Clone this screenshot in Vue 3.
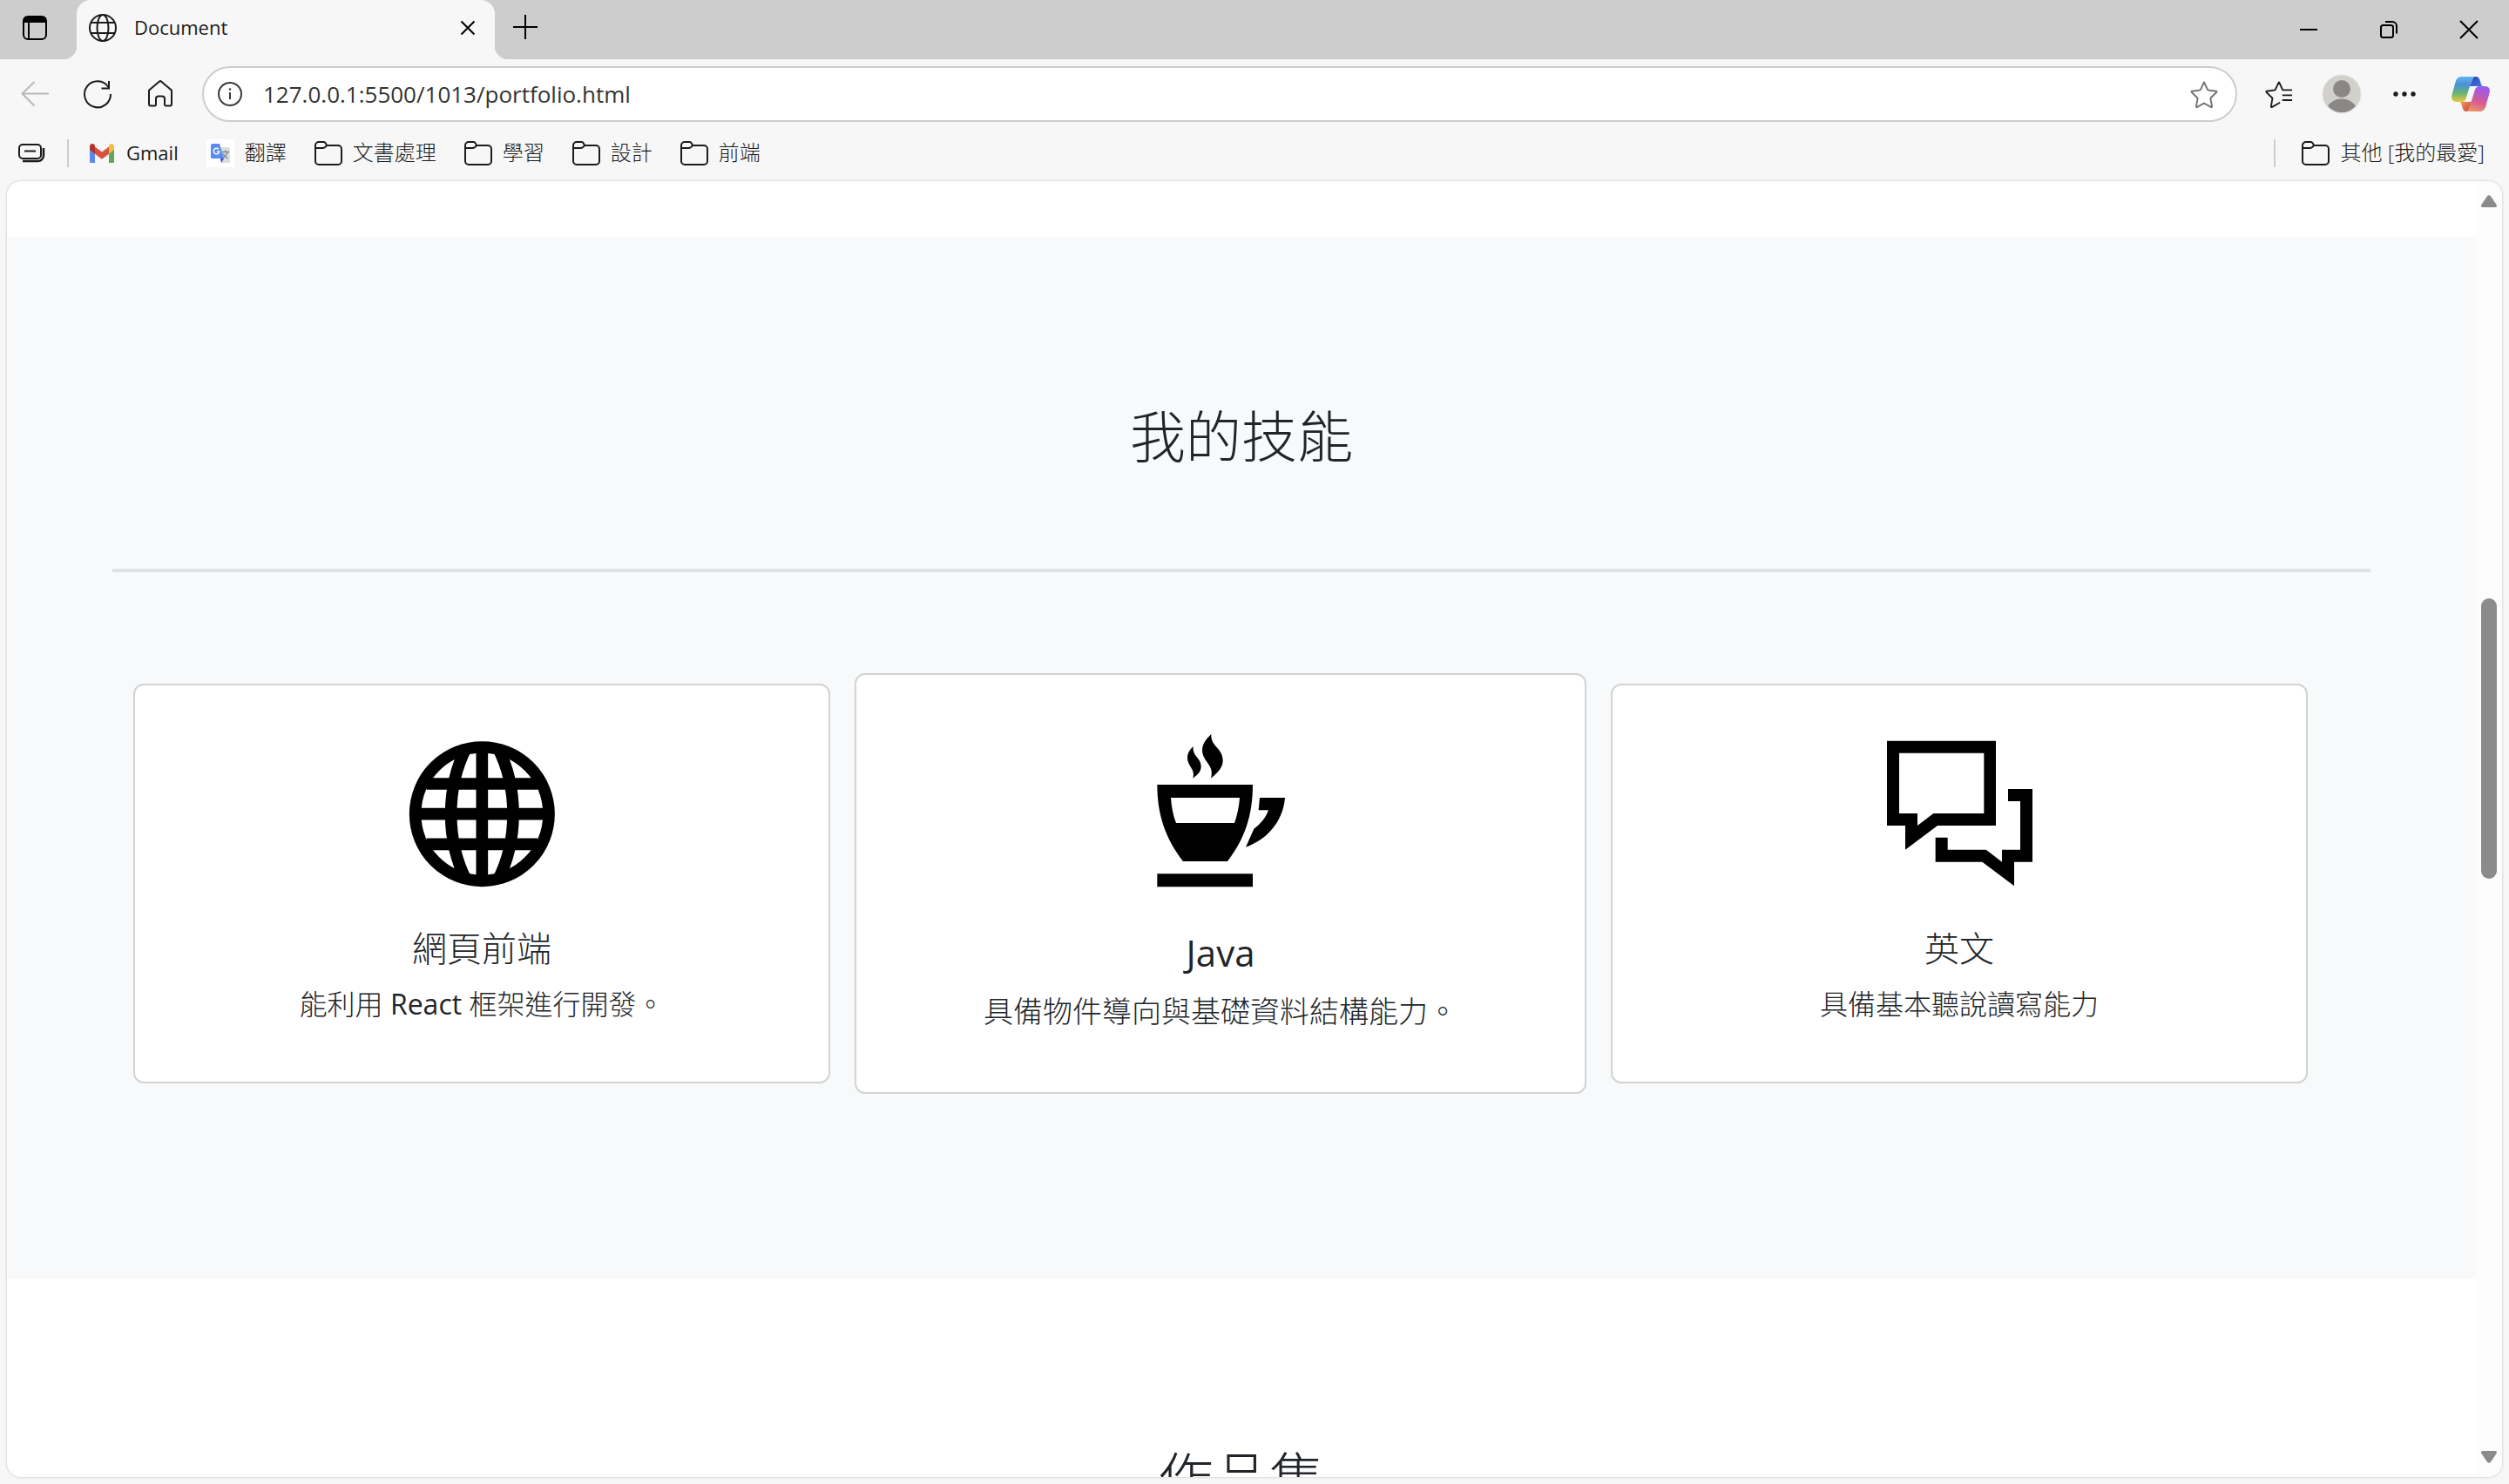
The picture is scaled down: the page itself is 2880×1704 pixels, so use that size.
<script setup>
const bookmarks = [
  { name: 'Gmail', icon: 'gmail', latin: true },
  { name: '翻譯', icon: 'translate' },
  { name: '文書處理', icon: 'folder' },
  { name: '學習', icon: 'folder' },
  { name: '設計', icon: 'folder' },
  { name: '前端', icon: 'folder' },
]

const skills = [
  { title: '網頁前端', text: ['能利用 ', 'React', ' 框架進行開發。'], icon: 'globe' },
  { title: 'Java', text: ['具備物件導向與基礎資料結構能力。'], icon: 'cup', raised: true, latin: true },
  { title: '英文', text: ['具備基本聽說讀寫能力'], icon: 'chat' },
]

const isLatin = (part) => /^[A-Za-z]+$/.test(part)
</script>

<template>
  <div class="browser" lang="zh-Hant">
    <header class="titlebar">
      <button class="tab-actions" aria-label="分頁動作">
        <svg width="28" height="28" viewBox="0 0 28 28">
          <rect x="1" y="1" width="26" height="26" rx="5" fill="none" stroke="#000" stroke-width="2" />
          <path d="M1 8V5a4 4 0 0 1 4-4h18a4 4 0 0 1 4 4v3z" fill="#000" />
          <path d="M7 8v19" stroke="#000" stroke-width="2" />
        </svg>
      </button>
      <div class="tab">
        <svg width="32" height="32" viewBox="0 0 32 32" fill="none" stroke="#1b1b1b" stroke-width="2">
          <circle cx="16" cy="16" r="15" />
          <ellipse cx="16" cy="16" rx="6.5" ry="15" />
          <path d="M2.500 10h27M2.500 22h27" />
        </svg>
        <span class="tab-title">Document</span>
        <button class="tab-close" aria-label="關閉分頁">
          <svg width="18" height="18" viewBox="0 0 18 18"><path d="M1.500 1.500l15 15M16.500 1.500l-15 15" stroke="#000" stroke-width="2" /></svg>
        </button>
      </div>
      <button class="new-tab" aria-label="新增索引標籤">
        <svg width="28" height="28" viewBox="0 0 28 28"><path d="M14 0v28M0 14h28" stroke="#000" stroke-width="2" /></svg>
      </button>
      <div class="window-buttons">
        <button aria-label="最小化">
          <svg width="20" height="20" viewBox="0 0 20 20"><path d="M0 10h20" stroke="#000" stroke-width="2" /></svg>
        </button>
        <button aria-label="還原">
          <svg width="20" height="20" viewBox="0 0 20 20" fill="none" stroke="#000" stroke-width="2">
            <rect x="1" y="5" width="14" height="14" rx="2.500" />
            <path d="M6 1h8a5 5 0 0 1 5 5v8.500" />
          </svg>
        </button>
        <button aria-label="關閉">
          <svg width="20" height="20" viewBox="0 0 20 20"><path d="M0 0l20 20M20 0L0 20" stroke="#000" stroke-width="2" /></svg>
        </button>
      </div>
    </header>

    <nav class="toolbar">
      <button class="tool" aria-label="上一頁">
        <svg width="32" height="32" viewBox="0 0 32 32" fill="none" stroke="#b9b9b9" stroke-width="2"><path d="M15.500 2L1.500 15.500l14 14M1.500 15.500H32" /></svg>
      </button>
      <button class="tool" aria-label="重新整理">
        <svg width="32" height="32" viewBox="0 0 32 32" fill="none" stroke="#1b1b1b" stroke-width="2"><path d="M31 16A15 15 0 1 1 28.500 8M29 1v8.500h-8.500" /></svg>
      </button>
      <button class="tool" aria-label="首頁">
        <svg width="32" height="32" viewBox="0 0 32 32" fill="none" stroke="#1b1b1b" stroke-width="2" stroke-linejoin="round"><path d="M3 12.500a2 2 0 0 1 .8-1.600L15 1.500a1.600 1.600 0 0 1 2 0l11.200 9.400a2 2 0 0 1 .8 1.600V27.500a2 2 0 0 1-2 2h-4.500a1.500 1.500 0 0 1-1.500-1.500v-6.500a3 3 0 0 0-3-3h-4a3 3 0 0 0-3 3V28a1.500 1.500 0 0 1-1.500 1.500H5a2 2 0 0 1-2-2z" /></svg>
      </button>
      <div class="address">
        <svg width="28" height="28" viewBox="0 0 28 28" fill="none" stroke="#3a3a3a" stroke-width="2"><circle cx="14" cy="14" r="13" /><path d="M14 12v8" /><circle cx="14" cy="8.500" r="1.300" fill="#3a3a3a" stroke="none" /></svg>
        <input type="text" aria-label="網址" value="127.0.0.1:5500/1013/portfolio.html" />
        <button class="bare" aria-label="加入最愛">
          <svg width="32" height="32" viewBox="0 0 34 34" fill="none" stroke="#707070" stroke-width="2" stroke-linejoin="round"><path d="M17 2.500l4.500 9.600 10.300 1.500c.6.100.8.700.4 1.100l-7.400 7.300 1.800 10.300c.1.600-.4 1-.9.700L17 28.100 8.300 33c-.5.300-1-.1-.9-.7l1.800-10.300-7.400-7.300c-.4-.4-.2-1 .4-1.100l10.300-1.500z" /></svg>
        </button>
      </div>
      <div class="tools-end">
        <button class="tool" aria-label="我的最愛">
          <svg width="32" height="32" viewBox="0 0 34 34" fill="none" stroke="#1b1b1b" stroke-width="2" stroke-linejoin="round"><path d="M33 12.100H21.500L17.400 3c-.2-.5-.7-.5-.9 0l-4.200 9.100L2 13.600c-.6.100-.8.700-.4 1.100L9 22 7.300 32.300c-.1.600.4 1 .9.700l10-5.600M21 18.500h12M21 24.500h12" /></svg>
        </button>
        <button class="tool" aria-label="設定檔">
          <svg width="46" height="46" viewBox="0 0 46 46">
            <clipPath id="avatar-clip"><circle cx="23" cy="23" r="21" /></clipPath>
            <circle cx="23" cy="23" r="22" fill="#d2d0cc" stroke="#e4e3e0" stroke-width="1" />
            <circle cx="23" cy="17" r="10" fill="#8a8886" />
            <ellipse cx="23" cy="43" rx="17.500" ry="14.500" fill="#8a8886" clip-path="url(#avatar-clip)" />
          </svg>
        </button>
        <button class="tool" aria-label="設定及其他">
          <svg width="28" height="8" viewBox="0 0 28 8" fill="#1b1b1b"><circle cx="4" cy="4" r="2.700" /><circle cx="14" cy="4" r="2.700" /><circle cx="24" cy="4" r="2.700" /></svg>
        </button>
        <button class="tool copilot" aria-label="Copilot">
          <svg width="44" height="40" viewBox="0 0 132 120">
            <defs>
              <linearGradient id="cp-left" x1="0" y1="0" x2="0" y2="1"><stop offset="0" stop-color="#5fb6f2" /><stop offset=".3" stop-color="#4a90d9" /><stop offset=".62" stop-color="#5fb37b" /><stop offset="1" stop-color="#e9c83c" /></linearGradient>
              <linearGradient id="cp-right" x1="0.300" y1="0" x2="0" y2="1"><stop offset="0" stop-color="#a05be6" /><stop offset=".5" stop-color="#d85a94" /><stop offset="1" stop-color="#eda45c" /></linearGradient>
              <linearGradient id="cp-top" x1="0" y1="0" x2="1" y2="1"><stop offset="0" stop-color="#2f3fb5" /><stop offset="1" stop-color="#3f7fe6" /></linearGradient>
              <linearGradient id="cp-bottom" x1="0" y1="0" x2="1" y2="1"><stop offset="0" stop-color="#efa04e" /><stop offset="1" stop-color="#c73a4c" /></linearGradient>
            </defs>
            <path d="M62 33L76 0h8c8 0 12 6 14 13l4 13c1 4 4 7 9 7z" fill="url(#cp-top)" />
            <path d="M30 86h42L56 120h-6c-7 0-10-5-12-12l-4-14c-1-4-2-6-4-8z" fill="url(#cp-bottom)" />
            <path d="M34 0h50c-8 0-12 5-15 14L50 74c-3 9-8 13-16 13H17C4 87-2 77 1 64L14 18C17 7 24 0 34 0z" fill="url(#cp-left)" />
            <path d="M98 120H48c8 0 11-5 14-14l18-59c3-9 8-14 16-14h19c13 0 19 9 16 22l-13 47c-3 11-10 18-20 18z" fill="url(#cp-right)" />
            <path d="M67 34h20c-6 2-8 6-10 13L68 78c-2 5-5 8-11 9h-13c4-2 6-6 8-12l9-31c2-6 3-9 6-10z" fill="#f7f7f7" />
          </svg>
        </button>
      </div>
    </nav>

    <nav class="bookmarks">
      <button class="bare" aria-label="工作區">
        <svg width="32" height="32" viewBox="0 0 32 32" fill="none" stroke="#1b1b1b" stroke-width="2"><rect x="2" y="6" width="25" height="16" rx="4" /><path d="M8 13.500h13" /><path d="M6 25h17.500a6.500 6.500 0 0 0 6.500-6.500V10" stroke-width="2.500" /></svg>
      </button>
      <span class="divider"></span>
      <a v-for="item in bookmarks" :key="item.name" href="#" class="bookmark">
        <svg v-if="item.icon === 'gmail'" width="32" height="32" viewBox="0 0 32 32">
          <path d="M2 8v17.500c0 1 .8 1.500 1.500 1.500H8V14z" fill="#5f87ee" />
          <path d="M30 8v17.500c0 1-.8 1.500-1.500 1.500H24V14z" fill="#5fa75b" />
          <path d="M8 8.500v8.200l8 6 8-6V8.500l-8 6z" fill="#d9503f" />
          <path d="M2 8.500c0-3.500 3-4.500 5-2.700L8 7v9.700l-6-4.800z" fill="#b3312b" />
          <path d="M30 8.500c0-3.500-3-4.500-5-2.700L24 7v9.700l6-4.800z" fill="#efbf3d" />
        </svg>
        <svg v-else-if="item.icon === 'translate'" width="32" height="32" viewBox="0 0 32 32">
          <path fill="#fff" d="M0 0h32v32H0z" />
          <path d="M13 9h12.500a1.500 1.500 0 0 1 1.500 1.500v15a1.500 1.500 0 0 1-1.500 1.500H17z" fill="#dadce0" />
          <path d="M17.500 14.500h8.500M21.700 12.500v2M24 14.500c-1 4-3.500 6-6 7.500M19 16.500c1 2.500 3.500 4.500 6 5.500" stroke="#7f8b95" stroke-width="1.300" fill="none" />
          <path d="M6.500 5H15l5 17H6.500A1.500 1.500 0 0 1 5 20.500v-14A1.500 1.500 0 0 1 6.500 5z" fill="#5c8bee" />
          <path d="M16 22h4l-3 5z" fill="#3a4fb8" />
          <path d="M14 11.300a3.300 3.300 0 1 0 .8 2.600h-3" stroke="#fff" stroke-width="1.400" fill="none" />
        </svg>
        <svg v-else width="32" height="32" viewBox="0 0 32 32" fill="none" stroke="#1b1b1b" stroke-width="2"><path d="M1 10V7a4 4 0 0 1 4-4h5.500c1.500 0 3 2.500 3.500 4h13a4 4 0 0 1 4 4v14a4 4 0 0 1-4 4H5a4 4 0 0 1-4-4zM1 10h8.500c2 0 3.500-1.500 4.500-3" /></svg>
        <span class="label" :class="{ latin: item.latin }">{{ item.name }}</span>
      </a>
      <span class="divider last"></span>
      <a href="#" class="bookmark">
        <svg width="32" height="32" viewBox="0 0 32 32" fill="none" stroke="#1b1b1b" stroke-width="2"><path d="M1 10V7a4 4 0 0 1 4-4h5.500c1.500 0 3 2.500 3.500 4h13a4 4 0 0 1 4 4v14a4 4 0 0 1-4 4H5a4 4 0 0 1-4-4zM1 10h8.500c2 0 3.500-1.500 4.500-3" /></svg>
        <span class="label">其他 [我的最愛]</span>
      </a>
    </nav>

    <div class="viewport">
      <main class="page">
        <section class="skills">
          <div class="container">
            <h2>我的技能</h2>
            <hr />
            <div class="cards">
              <article v-for="skill in skills" :key="skill.title" class="card" :class="{ raised: skill.raised }">
                <svg v-if="skill.icon === 'globe'" class="icon" viewBox="40 44 600 600" fill="none" stroke="#000" stroke-width="41">
                  <circle cx="341" cy="343" r="230" />
                  <path d="M341 100v486M110 343h462M150 239h382M150 447h382" />
                  <path d="M288 112C216 250 216 436 288 574M394 112C466 250 466 436 394 574" />
                </svg>
                <svg v-else-if="skill.icon === 'cup'" class="icon" viewBox="-12 18 630 630" fill="#000">
                  <path fill-rule="evenodd" d="M85 243H414C414 350 386 430 327 507H174C115 430 85 350 85 243zM132 288C134 320 140 350 150 375H351C360 350 367 320 369 288z" />
                  <path d="M438 288H525C518 370 464 432 390 458L418 395C444 376 460 354 468 331H434z" />
                  <path d="M85 550H414V595H85z" />
                  <path d="M271 69C268 112 311 116 311 160C311 184 294 202 270 221C284 176 240 164 240 124C240 102 253 87 271 69z" />
                  <path d="M209 111C205 146 236 150 236 180C236 198 225 208 208 221C218 190 189 180 189 150C189 134 197 124 209 111z" />
                </svg>
                <svg v-else class="icon" viewBox="27 46 600 600" fill="#000">
                  <path fill-rule="evenodd" d="M78 93H453V385H252L141 468V385H78zM120 135V343H183V385L238 343H412V135z" />
                  <path d="M495 259H579V510H516V593L406 510H245V426H287V468H419L474 510V468H537V301H495z" />
                </svg>
                <h3 :class="{ latin: skill.latin }">{{ skill.title }}</h3>
                <p><span v-for="part in skill.text" :key="part" :class="{ latin: isLatin(part) }">{{ part }}</span></p>
              </article>
            </div>
          </div>
        </section>
        <section class="works">
          <h2>作品集</h2>
        </section>
      </main>
      <div class="scrollbar">
        <svg width="18" height="14" viewBox="0 0 18 14" fill="#8b8b8b"><path d="M7 1.200a2.400 2.400 0 0 1 4 0l6.600 9.800c.9 1.400.2 3-1.400 3H1.800C.2 14-.5 12.400.4 11z" /></svg>
        <div class="track">
          <span class="before"></span>
          <span class="thumb"></span>
          <span class="after"></span>
        </div>
        <svg width="18" height="14" viewBox="0 0 18 14" fill="#8b8b8b"><path d="M7 12.800a2.400 2.400 0 0 0 4 0l6.600-9.800c.9-1.400.2-3-1.400-3H1.800C.2 0-.5 1.600.4 3z" /></svg>
      </div>
    </div>
  </div>
</template>

<style>
body {
  background: #f7f7f7;
}
</style>

<style scoped>
.browser {
  display: flex;
  flex-direction: column;
  height: 100vh;
  overflow: hidden;
  background: #f7f7f7;
  color: #1b1b1b;
  font-family: "Open Sans", "Noto Sans CJK TC", sans-serif;
  font-size: 24px;
}

.browser * {
  box-sizing: border-box;
}

svg {
  display: block;
  flex: none;
  overflow: visible;
}

button {
  display: flex;
  align-items: center;
  justify-content: center;
  padding: 0;
  border: 0;
  background: none;
  font: inherit;
  color: inherit;
}

.titlebar {
  display: flex;
  align-items: stretch;
  flex: none;
  height: 68px;
  background: #cdcdcd;
}

.tab-actions {
  width: 80px;
  margin-right: 8px;
  padding-bottom: 4px;
}

.tab {
  position: relative;
  display: flex;
  align-items: center;
  width: 480px;
  padding: 0 22px 4px 14px;
  border-radius: 16px 16px 0 0;
  background: #f7f7f7;
}

.tab::before,
.tab::after {
  content: "";
  position: absolute;
  bottom: 0;
  width: 16px;
  height: 16px;
}

.tab::before {
  right: 100%;
  background: radial-gradient(circle at 0 0, #cdcdcd 16px, #f7f7f7 17px);
}

.tab::after {
  left: 100%;
  background: radial-gradient(circle at 100% 0, #cdcdcd 16px, #f7f7f7 17px);
}

.tab-title {
  flex: 1;
  padding: 0 0 2px 20px;
  font-size: 22px;
}

.new-tab {
  width: 70px;
  padding-bottom: 6px;
}

.window-buttons {
  display: flex;
  margin-left: auto;
}

.window-buttons button {
  width: 92px;
}

.toolbar {
  display: flex;
  align-items: center;
  flex: none;
  height: 80px;
  padding-left: 4px;
}

.tool {
  width: 72px;
  height: 64px;
}

.address {
  display: flex;
  align-items: center;
  flex: 1;
  height: 64px;
  margin-left: 12px;
  padding: 0 20px 0 16px;
  border: 2px solid #cdcdcd;
  border-radius: 32px;
  background: #fff;
}

.address input {
  flex: 1;
  min-width: 0;
  padding: 0 0 0 24px;
  border: 0;
  outline: 0;
  background: none;
  color: #333;
  font: inherit;
  font-size: 26px;
}

.tools-end {
  display: flex;
  padding: 0 4px 0 12px;
}

.copilot {
  width: 80px;
}

.bookmarks {
  display: flex;
  align-items: center;
  flex: none;
  height: 60px;
  padding: 0 28px 4px 20px;
  font-weight: 300;
}

.divider {
  width: 2px;
  height: 32px;
  margin: 0 22px 0 25px;
  background: #cdcdcd;
}

.divider.last {
  margin: 0 30px 0 auto;
}

.bookmark {
  display: flex;
  align-items: center;
  gap: 12px;
  margin-right: 32px;
  color: inherit;
  line-height: 32px;
  text-decoration: none;
  white-space: nowrap;
}

.bookmark:last-child {
  margin-right: 0;
}

.label {
  padding-bottom: 3px;
}

.label.latin {
  font-size: 22px;
}

.latin {
  font-weight: 400;
}

.viewport {
  display: flex;
  flex: 1;
  min-height: 0;
  margin: 0 8px 8px;
  overflow: hidden;
  border-radius: 16px;
  background: #fff;
  box-shadow: 0 0 3px #bdbdbd;
}

.page {
  flex: 1;
  min-width: 0;
  padding-top: 64px;
  overflow: hidden;
  color: #212529;
  font-weight: 300;
  text-align: center;
}

.skills {
  padding: 190px 0 212px;
  background: #f8f9fb;
}

.works {
  padding-top: 190px;
}

.container {
  max-width: 2592px;
  margin: 0 auto;
}

h2 {
  margin: 0;
  font-size: 64px;
  font-weight: 300;
  line-height: 77px;
}

hr {
  height: 4px;
  margin: 114px 0 116px;
  border: 0;
  background: #dee2e6;
}

.cards {
  display: grid;
  grid-template-columns: 20fr 21fr 20fr;
  align-items: center;
  gap: 28px;
  padding: 0 72px 0 24px;
}

.card {
  padding: 48px 48px 65px;
  border: 2px solid #d2d3d3;
  border-radius: 12px;
  background: #fff;
}

.icon {
  width: 200px;
  height: 200px;
  margin: 0 auto 30px;
}

.card h3 {
  margin: 0 0 16px;
  font-size: 40px;
  font-weight: 300;
  line-height: 48px;
}

.card h3.latin {
  font-weight: 400;
}

.card p {
  margin: 0;
  font-size: 32px;
  line-height: 48px;
  white-space: pre-wrap;
}

.card.raised {
  padding: 51px 51px 68px;
}

.raised .icon {
  width: 210px;
  height: 210px;
  margin-bottom: 33px;
}

.card.raised h3 {
  margin-bottom: 17px;
  font-size: 42px;
  line-height: 50px;
}

.card.raised p {
  font-size: 34px;
  line-height: 50px;
}

.scrollbar {
  display: flex;
  flex-direction: column;
  align-items: center;
  width: 30px;
  padding: 16px 0;
  background: #fcfcfc;
}

.track {
  display: flex;
  flex-direction: column;
  flex: 1;
}

.before {
  flex: 449;
}

.thumb {
  flex: 322;
  width: 18px;
  border-radius: 9px;
  background: #8b8b8b;
}

.after {
  flex: 657;
}
</style>
